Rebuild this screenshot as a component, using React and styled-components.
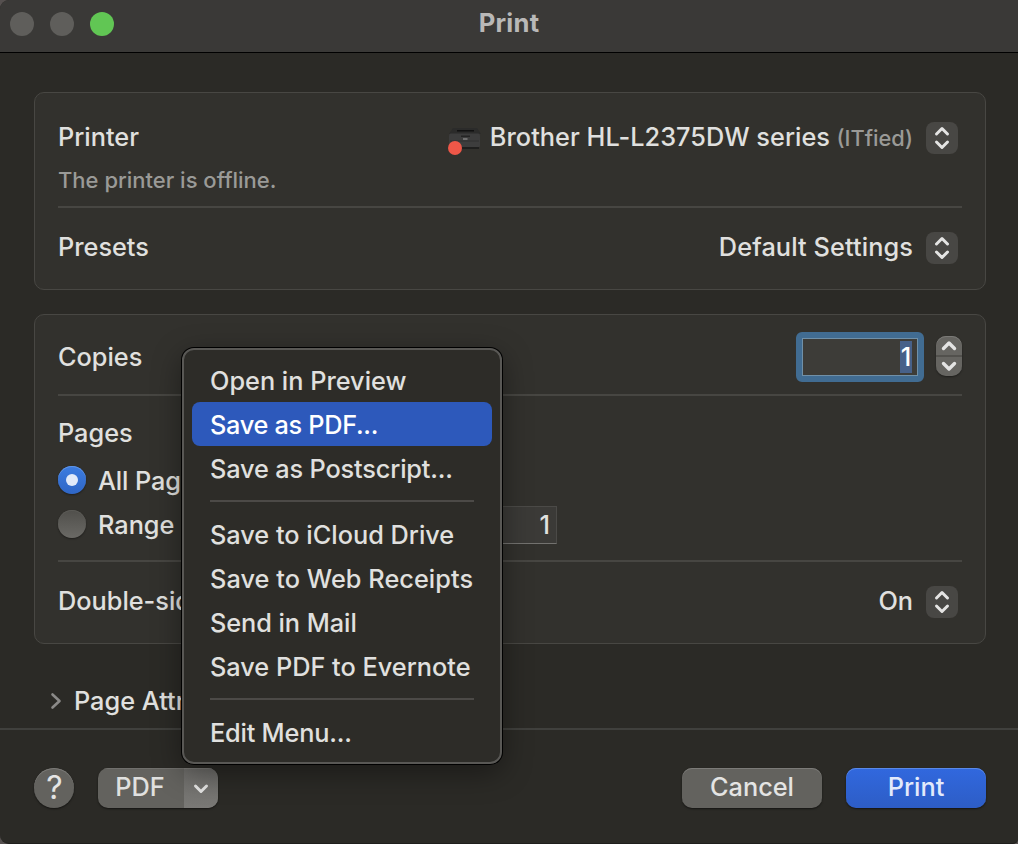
import React from "react";
import styled, { createGlobalStyle } from "styled-components";

const Global = createGlobalStyle`
  *, *::before, *::after { box-sizing: border-box; }
  body { margin: 0; background: #55504f; overflow: hidden; }
  button { font: inherit; color: inherit; border: 0; padding: 0; margin: 0; letter-spacing: inherit; }
`;

const Window = styled.div`
  position: relative;
  width: 1018px;
  height: 844px;
  display: flex;
  flex-direction: column;
  background: #2b2a26;
  color: #e0e0df;
  font-family: Inter, "Liberation Sans", sans-serif;
  font-size: 25.3px;
  font-weight: 450;
  line-height: 32px;
  overflow: hidden;
  border-radius: 9px 0 5px 9px;
  border-bottom: 1px solid #1f1e1c;
`;

const TitleBar = styled.header`
  display: grid;
  grid-template-columns: 1fr auto 1fr;
  align-items: center;
  height: 53px;
  padding: 0 10px 5px;
  background: #3a3937;
  border-bottom: 1px solid #000;
  flex: none;
`;

const Lights = styled.div`
  display: flex;
  gap: 16px;
`;

const Light = styled.span`
  width: 24px;
  height: 24px;
  border-radius: 50%;
  background: ${(p) => p.$color};
`;

const Title = styled.h1`
  margin: 0;
  font-size: 25.6px;
  font-weight: 700;
  letter-spacing: 0.25px;
  color: #b9b8b7;
  padding-bottom: 2px;
`;

const Content = styled.main`
  flex: none;
  height: 675px;
  padding: 39px 32px 0 34px;
  display: flex;
  flex-direction: column;
`;

const Card = styled.section`
  height: ${(p) => p.$height}px;
  margin-bottom: 24px;
  padding: ${(p) => p.$top ?? 0}px 23px 0;
  background: #32312d;
  border: 1px solid #484743;
  border-radius: 10px;
  display: flex;
  flex-direction: column;
  flex: none;
`;

const Row = styled.div`
  display: flex;
  align-items: center;
  height: ${(p) => p.$height}px;
  padding-top: ${(p) => p.$top ?? 0}px;
  padding-right: ${(p) => p.$right ?? 4}px;
  flex: none;
`;

const StatusRow = styled(Row)`
  align-items: flex-start;
  line-height: 18px;
`;

const Label = styled.span`
  white-space: nowrap;
  letter-spacing: ${(p) => p.$track ?? 0}px;
  flex: ${(p) => (p.$grow ? 1 : "none")};
  padding-bottom: ${(p) => p.$lift ?? 2}px;
`;

const Muted = styled(Label)`
  font-size: ${(p) => p.$size}px;
  margin-left: ${(p) => p.$left ?? 0}px;
  padding-bottom: 0;
  color: #9a9a97;
`;

const OptionLabel = styled(Label)`
  width: ${(p) => (p.$width ? `${p.$width}px` : "auto")};
  padding: 2px 0 0;
`;

const Divider = styled.hr`
  width: 904px;
  height: 2px;
  margin: ${(p) => p.$above ?? 0}px 0 0;
  border: 0;
  background: #474642;
  flex: none;
`;

const PrinterIcon = styled.svg`
  width: 36px;
  height: 36px;
  margin-right: 8px;
`;

const PopupButton = styled.button`
  width: 32px;
  height: 32px;
  margin-left: 13px;
  border-radius: 8px;
  background: #484744;
  display: flex;
`;

const CopiesField = styled.div`
  width: 128px;
  height: 50px;
  padding: 1px 6px;
  border: 6px solid #416c92;
  border-radius: 6px;
  outline: 1px solid #7090a8;
  outline-offset: -7px;
  background: #3d3c38;
  display: flex;
  align-items: center;
  justify-content: flex-end;
  margin-right: 12px;
`;

const Selection = styled.span`
  width: 12px;
  height: 32px;
  line-height: 32px;
  background: #476189;
  color: #fff;
  display: flex;
  justify-content: center;
`;

const Stepper = styled.button`
  width: 26px;
  height: 40px;
  margin-bottom: 2px;
  border-radius: 10px;
  background: linear-gradient(#666561 0 19px, #52514d 19px 21px, #666561 21px);
  box-shadow: inset 0 1px #7b7a77, 0 1px 2px #0006;
  display: flex;
`;

const Radio = styled.span`
  width: 28px;
  height: 28px;
  margin-right: 12px;
  border-radius: 50%;
  display: flex;
  align-items: center;
  justify-content: center;
  background: ${(p) => (p.$on ? "linear-gradient(#3c7ce0, #2f66c6)" : "linear-gradient(#504f4b, #6a6965)")};
  box-shadow: inset 0 1px ${(p) => (p.$on ? "#5f94e6" : "#5b5a56")}, 0 1px 2px #0006;
  &::after {
    content: "";
    width: 12px;
    height: 12px;
    border-radius: 50%;
    background: ${(p) => (p.$on ? "#e2eaf9" : "transparent")};
  }
`;

const RangeField = styled.div`
  width: 108px;
  height: 38px;
  margin-top: 2px;
  padding-right: 6px;
  background: #3b3a37;
  border: 1px solid #4b4a47;
  border-bottom: 1px solid #73726f;
  display: flex;
  align-items: center;
  justify-content: flex-end;
`;

const Disclosure = styled.div`
  display: flex;
  align-items: center;
  height: 40px;
  margin: 13px 0 0 14px;
  gap: 10px;
`;

const Footer = styled.footer`
  flex: 1;
  border-top: 2px solid #40403d;
  padding: 38px 32px 0 34px;
  display: flex;
  align-items: flex-start;
`;

const Button = styled.button`
  width: ${(p) => p.$width}px;
  height: 40px;
  padding-bottom: 2px;
  border-radius: ${(p) => (p.$round ? 20 : 10)}px;
  background: ${(p) => (p.$primary ? "linear-gradient(#3168de, #2d5dc6)" : "#63625e")};
  color: ${(p) => (p.$primary ? "#e3eafb" : "#e4e4e3")};
  box-shadow: inset 0 1px ${(p) => (p.$primary ? "#5a89e8" : "#7c7b78")}, 0 1px 2px #0008;
  margin-right: ${(p) => p.$after ?? 0}px;
`;

const HelpButton = styled(Button)`
  padding: 0 0 0 1px;
  font-size: 32px;
  font-weight: 400;
`;

const SplitButton = styled.div`
  width: 120px;
  height: 40px;
  border-radius: 10px;
  overflow: hidden;
  display: flex;
  background: #63625e;
  box-shadow: 0 1px 2px #0008;
  margin-right: auto;
`;

const SplitMain = styled.button`
  width: 86px;
  background: transparent;
  box-shadow: inset 0 1px #71706d;
  padding: 0 2px 2px 0;
`;

const SplitArrow = styled.button`
  width: 34px;
  background: linear-gradient(#6c6b68, #7a7976);
  box-shadow: inset 0 1px #7b7a77;
  display: flex;
`;

const Menu = styled.ul`
  position: absolute;
  left: 182px;
  top: 348px;
  width: 320px;
  height: 416px;
  margin: 0;
  padding: 8px;
  list-style: none;
  background: #2d2c28;
  border: 2px solid #595855;
  border-radius: 12px;
  box-shadow: 0 0 0 1px #000, 0 8px 30px #0006;
`;

const MenuItem = styled.li`
  height: 44px;
  padding: 4px 18px 0;
  display: flex;
  align-items: center;
  border-radius: 8px;
  background: ${(p) => (p.$active ? "#2d59bb" : "transparent")};
  color: ${(p) => (p.$active ? "#fff" : "inherit")};
`;

const MenuRule = styled.li`
  height: 2px;
  margin: 10px 18px;
  background: #4c4a47;
`;

const Strokes = ({ w, h, d, stroke = "#e4e4e3", sw = 3 }) => (
  <svg width={w} height={h} viewBox={`0 0 ${w} ${h}`} fill="none" stroke={stroke} strokeWidth={sw} strokeLinecap="round" strokeLinejoin="round">
    <path d={d} />
  </svg>
);

const Popup = () => (
  <PopupButton>
    <Strokes w={32} h={32} d="M10.5 12 16 6.5 21.5 12M10.5 20 16 25.5 21.5 20" />
  </PopupButton>
);

const menu = [
  ["Open in Preview", 0],
  ["Save as PDF...", -0.3],
  ["Save as Postscript...", -0.15],
  null,
  ["Save to iCloud Drive", 0],
  ["Save to Web Receipts", 0.05],
  ["Send in Mail", -0.05],
  ["Save PDF to Evernote", 0],
  null,
  ["Edit Menu...", -0.2],
];

export default function App() {
  return (
    <Window>
      <Global />
      <TitleBar>
        <Lights>
          <Light $color="#5f5e5b" />
          <Light $color="#5f5e5b" />
          <Light $color="#61c654" />
        </Lights>
        <Title>Print</Title>
      </TitleBar>
      <Content>
        <Card $height={198} $top={12}>
          <Row $height={66}>
            <Label $grow>Printer</Label>
            <PrinterIcon viewBox="0 0 36 36">
              <path d="M7 8h24l4 6H3z" fill="#2b2b2a" />
              <path d="M11 10h17v1.5H11z" fill="#111" />
              <rect x="3" y="13.5" width="31" height="14" rx="2" fill="#3d3d3d" />
              <path d="M15 15.5h9v1.5h-9z" fill="#242424" />
              <path d="M4 20.5h29v1H4z" fill="#313131" />
              <path d="M17 18.5h4.5v1H17z" fill="#a5a5a5" />
              <path d="M12 27h21v2H12z" fill="#1f1f1e" />
              <circle cx="9" cy="28" r="7" fill="#ee5748" />
            </PrinterIcon>
            <Label $track={0.04}>Brother HL-L2375DW series</Label>
            <Muted $size={21.8} $left={6.5}>(ITfied)</Muted>
            <Popup />
          </Row>
          <StatusRow $height={35}>
            <Muted $size={22}>The printer is offline.</Muted>
          </StatusRow>
          <Divider />
          <Row $height={80}>
            <Label $grow>Presets</Label>
            <Label $track={0.1}>Default Settings</Label>
            <Popup />
          </Row>
        </Card>
        <Card $height={330}>
          <Row $height={79} $top={5} $right={0}>
            <Label $grow $lift={0}>Copies</Label>
            <CopiesField><Selection>1</Selection></CopiesField>
            <Stepper>
              <Strokes w={26} h={40} d="M7.5 12.5 13 7 18.5 12.5M7.5 27.5 13 33 18.5 27.5" sw={3.4} />
            </Stepper>
          </Row>
          <Divider />
          <Row $height={62} $top={14}><Label>Pages</Label></Row>
          <Row $height={44}><Radio $on /><OptionLabel $track={-0.1}>All Pages</OptionLabel></Row>
          <Row $height={44}><Radio /><OptionLabel $width={351}>Range</OptionLabel><RangeField>1</RangeField></Row>
          <Divider $above={14} />
          <Row $height={80}>
            <Label $grow>Double-sided</Label>
            <Label>On</Label>
            <Popup />
          </Row>
        </Card>
        <Disclosure>
          <Strokes w={16} h={20} d="M4.5 3.5 11.5 10 4.5 16.5" stroke="#8b8a88" sw={2.6} />
          <Label $lift={0}>Page Attributes</Label>
        </Disclosure>
      </Content>
      <Footer>
        <HelpButton $width={40} $round $after={24}>?</HelpButton>
        <SplitButton>
          <SplitMain>PDF</SplitMain>
          <SplitArrow>
            <Strokes w={34} h={40} d="M11.5 18 17 23.5 22.5 18" />
          </SplitArrow>
        </SplitButton>
        <Button $width={140} $after={24}>Cancel</Button>
        <Button $width={140} $primary>Print</Button>
      </Footer>
      <Menu>
        {menu.map((m, i) =>
          m ? (
            <MenuItem key={m[0]} $active={i === 1}>
              <Label $track={m[1]}>{m[0]}</Label>
            </MenuItem>
          ) : (
            <MenuRule key={i} />
          )
        )}
      </Menu>
    </Window>
  );
}
